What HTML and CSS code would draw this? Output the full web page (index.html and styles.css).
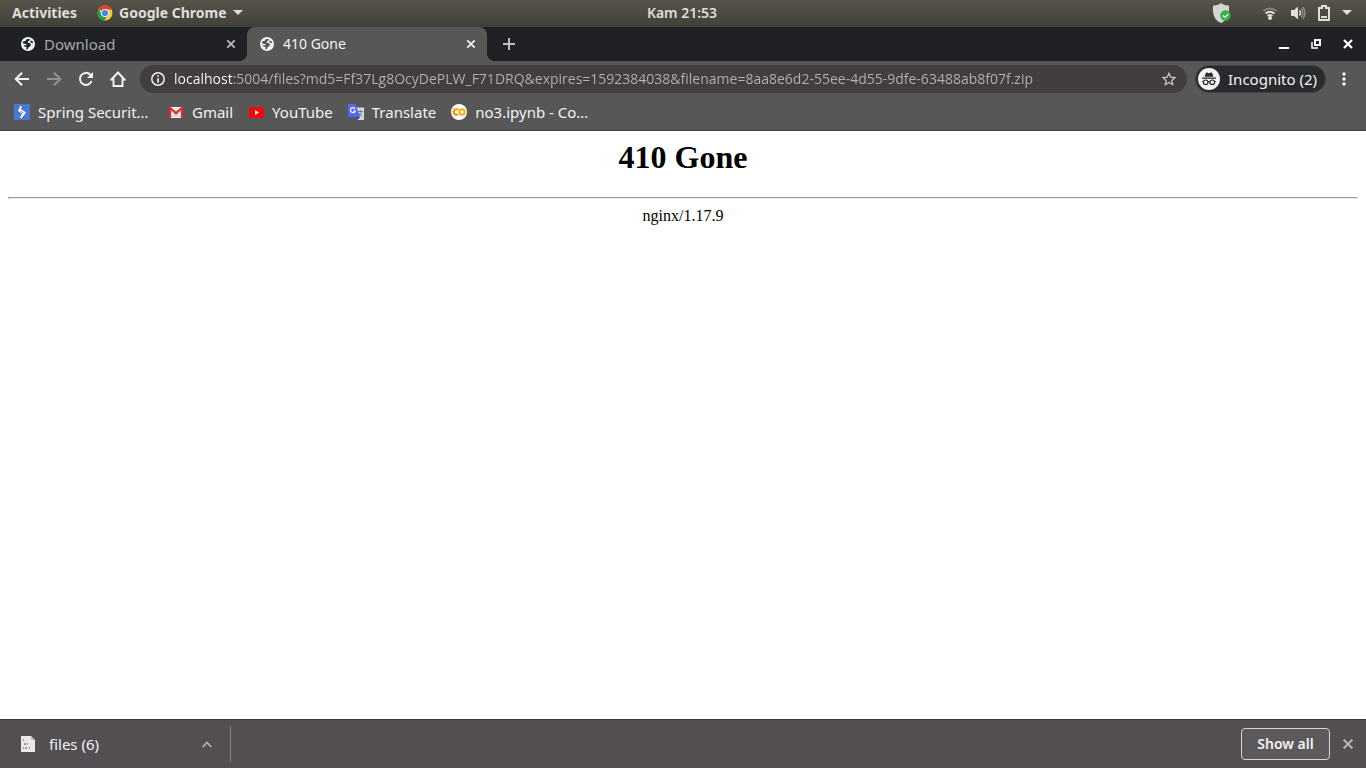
FILE: index.html
```html
<!DOCTYPE html>
<html lang="en">
<head>
<meta charset="utf-8">
<title>410 Gone</title>
<link rel="stylesheet" href="styles.css">
</head>
<body>
<svg class="defs" aria-hidden="true">
  <symbol id="globe" viewBox="0 0 14 14"><circle cx="7" cy="7" r="7" fill="#f1f3f4"/><path d="M5.600 2.200 8.500 1.700 8.800 3.200 7 4.200 6.600 5.500 8.500 6 9.800 7 9.600 9 7.600 10.200 6.400 12.400 5.100 12 5.600 9.900 3.400 9.600 2.600 8.300 5.500 8.300 5.600 7.300 3.600 6.700 1.700 6.300 2.400 4.300 4.400 4ZM9.800 3.500 11.400 4 12.300 6.300 10.900 6 9.200 5.200Z" fill="currentColor"/></symbol>
  <symbol id="cross" viewBox="0 0 10 10"><path d="m1.300 1.300 7.400 7.400m0-7.400-7.400 7.400" fill="none" stroke="currentColor" stroke-width="1.700"/></symbol>
  <symbol id="caret" viewBox="0 0 10 6"><path d="M0 0h10L5 5Z" fill="currentColor"/></symbol>
</svg>
<div class="desktop">
  <header class="panel">
    <div class="panel-side">
      <button class="panel-item">Activities</button>
      <button class="panel-item app-menu">
        <svg class="icon16" viewBox="0 0 16 16"><circle cx="8" cy="8" r="7.500" fill="#fbc934"/><path d="M8 8 1.500 4.200A7.500 7.500 0 0 1 14.600 4.400L8 4.500Z" fill="#e34133"/><path d="M1.500 4.200A7.500 7.500 0 0 0 7.200 15.500L11 9.800 8 11.400 5 9.800Z" fill="#1fa050"/><circle cx="8" cy="8" r="4" fill="#f4f4f4"/><circle cx="8" cy="8" r="3.100" fill="#4285f4"/></svg>
        <span>Google Chrome</span>
        <svg class="caret"><use href="#caret"/></svg>
      </button>
    </div>
    <button class="clock">Kam 21:53</button>
    <div class="panel-side tray">
      <button aria-label="Security status"><svg width="20" height="22" viewBox="0 0 20 22"><path d="M9 1c2.500 2 5 2.500 8 2.500C17.500 12 16 18 9 21 2 18 .5 12 1 3.500 4 3.500 6.500 3 9 1Z" fill="#d5d5d2"/><circle cx="13.500" cy="13.500" r="5.200" fill="#32b14b"/><path d="m11 13.500 2 2 3.300-3.500" fill="none" stroke="#fff" stroke-width="1.200"/></svg></button>
      <button class="system" aria-label="System menu">
        <svg width="16" height="16" viewBox="0 0 16 16" fill="none" stroke-width="2"><path d="M1.500 6q6.500-5 13 0" stroke="#86847d"/><path d="M3.500 8.500q4.500-3.500 9 0M5.600 11q2.400-2 4.800 0" stroke="#dededa"/><circle cx="8" cy="13" r="2" fill="#dededa"/></svg>
        <svg width="16" height="16" viewBox="0 0 16 16" fill="none"><path d="M1 5h3l4-3.500v13L4 11H1Z" fill="#dededa"/><path d="M9.500 5.500q2 2.500 0 5" stroke="#dededa" stroke-width="1.500"/><path d="M11.300 3.500q3.500 4.500 0 9M13 2q4 6 0 12" stroke="#96948c" stroke-width="1.300"/></svg>
        <svg width="12" height="16" viewBox="0 0 12 16"><path d="M4 1h4v2h3v12H1V3h3Z" fill="none" stroke="#dededa" stroke-width="2"/><path d="M3 11h6v2H3Z" fill="#dededa"/></svg>
        <svg class="caret"><use href="#caret"/></svg>
      </button>
    </div>
  </header>

  <nav class="tabs" aria-label="Tabs">
    <div class="tab inactive"><svg class="favicon"><use href="#globe"/></svg><span class="tab-title">Download</span><button class="close" aria-label="Close Download"><svg class="icon10"><use href="#cross"/></svg></button></div>
    <div class="tab active"><svg class="favicon"><use href="#globe"/></svg><span class="tab-title">410 Gone</span><button class="close" aria-label="Close 410 Gone"><svg class="icon10"><use href="#cross"/></svg></button></div>
    <button class="new-tab" aria-label="New tab"><svg width="12" height="12" viewBox="0 0 12 12"><path d="M6 0v12M0 6h12" stroke="currentColor" stroke-width="2"/></svg></button>
    <div class="window-controls">
      <button aria-label="Minimize"><svg width="10" height="10"><path d="M0 8h10v2H0Z" fill="#fff"/></svg></button>
      <button aria-label="Restore"><svg width="10" height="10" viewBox="0 0 10 10"><path d="M4 1h5v5H4Z" fill="none" stroke="#fff" stroke-width="2"/><path d="M1 3v6h6" fill="none" stroke="#fff" stroke-width="1.500"/></svg></button>
      <button aria-label="Close window"><svg width="10" height="10" viewBox="0 0 10 10"><path d="m1 1 8 8m0-8-8 8" stroke="#fff" stroke-width="2.200"/></svg></button>
    </div>
  </nav>

  <div class="toolbar">
    <button aria-label="Back"><svg class="icon16" viewBox="0 0 16 16"><path d="M15 8H2m6-6.300L1.700 8 8 14.300" fill="none" stroke="#f1f3f4" stroke-width="2"/></svg></button>
    <button aria-label="Forward"><svg class="icon16" viewBox="0 0 16 16"><path d="M1 8h13M8 1.700 14.300 8 8 14.300" fill="none" stroke="#929292" stroke-width="2"/></svg></button>
    <button aria-label="Reload"><svg class="icon16" viewBox="0 0 16 16"><path d="M13.600 10A6 6 0 1 1 12.300 3.700L13.500 5" fill="none" stroke="#f1f3f4" stroke-width="2"/><path d="M15 1v6H9Z" fill="#f1f3f4"/></svg></button>
    <button aria-label="Home"><svg class="icon16" viewBox="0 0 16 16"><path d="M1.500 8.500 8 1.500l6.500 7H12.500v6.500h-9V8.500Z" fill="none" stroke="#f1f3f4" stroke-width="1.900"/></svg></button>
    <div class="omnibox">
      <button aria-label="View site information"><svg width="14" height="14" viewBox="0 0 14 14"><circle cx="7" cy="7" r="6.200" fill="none" stroke="#f1f3f4" stroke-width="1.500"/><path d="M6.200 3.200h1.700v1.600H6.200Zm0 3h1.700v4.600H6.200Z" fill="#f1f3f4"/></svg></button>
      <input class="url" type="text" aria-label="Address" spellcheck="false" value="localhost:5004/files?md5=Ff37Lg8OcyDePLW_F71DRQ&amp;expires=1592384038&amp;filename=8aa8e6d2-55ee-4d55-9dfe-63488ab8f07f.zip">
      <button aria-label="Bookmark this page"><svg width="14" height="14" viewBox="0 0 14 14"><path d="m7 1.300 1.700 3.900 4.300.4-3.200 2.900.9 4.200L7 10.500l-3.700 2.200.9-4.200L1 5.600l4.300-.4Z" fill="none" stroke="#c9c7c8" stroke-width="1.300"/></svg></button>
    </div>
    <button class="incognito">
      <svg width="22" height="22" viewBox="0 0 22 22"><circle cx="11" cy="11" r="11" fill="#f1f3f4"/><path d="M7.700 5.200q.3-.9 1.200-.6L11 5.200l2.100-.6q.9-.3 1.200.6l1 3.500H6.700ZM4 9.500h14v1.200H4Z" fill="#292a2d"/><g fill="none" stroke="#292a2d" stroke-width="1.200"><circle cx="7.700" cy="14.300" r="2.300"/><circle cx="14.300" cy="14.300" r="2.300"/><path d="M10 14q1-.8 2 0M4.200 13.500h1.200m11.200 0h1.200"/></g></svg>
      <span>Incognito (2)</span>
    </button>
    <button class="menu" aria-label="Chrome menu"><svg width="4" height="14" fill="#f1f3f4"><circle cx="2" cy="2" r="1.700"/><circle cx="2" cy="7" r="1.700"/><circle cx="2" cy="12" r="1.700"/></svg></button>
  </div>

  <nav class="bookmarks" aria-label="Bookmarks">
    <a href="#spring"><svg class="icon16" viewBox="0 0 16 16"><rect width="16" height="16" rx="1" fill="#4878d3"/><path d="m6.500 1.500 1.500 1.500-1.300 2 5.300 3.500-4.500 6-1.500-1.200 2.200-3.500L4 7Z" fill="#fff"/><path d="m6.700 7.300 2.600 1.500" stroke="#4878d3" stroke-width="1"/></svg><span>Spring Securit…</span></a>
    <a href="#gmail"><svg class="icon16" viewBox="0 0 16 16"><path d="M1 3h14v11H1Z" fill="#f1f1f1"/><path d="m3 13 5-5 5 5Z" fill="#d9d9d9"/><path d="M2 14V4l6 5.200L14 4v10" fill="none" stroke="#d92c35" stroke-width="2.200"/></svg><span>Gmail</span></a>
    <a href="#youtube"><svg class="icon16" viewBox="0 0 16 16"><rect x="1" y="3" width="15" height="11" rx="2.500" fill="#f00"/><path d="m7 6 4 2.500L7 11Z" fill="#fff"/></svg><span>YouTube</span></a>
    <a href="#translate"><svg class="icon16" viewBox="0 0 16 16"><path d="M7 3.500h9V16H9Z" fill="#d5d8dc"/><path d="M9.500 7.500H15M12.300 6v1.500m1.500 0q-.8 3-3.500 5m.7-3.500q1 2 3.300 3.500" fill="none" stroke="#607d8b" stroke-width="1"/><path d="m8 13h4l-2.500 3Z" fill="#3c25b8"/><path d="M0 0h7.500L12 13H1.500Q0 13 0 11.500Z" fill="#5368f5"/><path d="M7 4.800A2.500 2.500 0 1 0 7.300 7H5" fill="none" stroke="#fff" stroke-width="1.200"/></svg><span>Translate</span></a>
    <a href="#notebook"><svg class="icon16" viewBox="0 0 16 16"><circle cx="8" cy="8" r="8" fill="#fff"/><g fill="none" stroke-width="2"><circle cx="11" cy="8" r="2.700" stroke="#f9ab00"/><path d="M7 5.800a2.700 2.700 0 1 0 0 4.400" stroke="#f48b00"/><path d="M3.100 6.100A2.700 2.700 0 0 1 7 5.800" stroke="#fbb400"/></g></svg><span>no3.ipynb - Co…</span></a>
  </nav>

  <main class="page">
    <h1>410 Gone</h1>
    <hr>
    <p>nginx/1.17.9</p>
  </main>

  <footer class="downloads">
    <div class="download">
      <svg class="icon16" viewBox="0 0 16 16"><path d="M1 0h10l4 4v12H1Z" fill="#e8e8e6"/><path d="M11 0v4h4Z" fill="#bcbcba"/><path d="M3 3h1v2H3Zm1 4h2v2H4Zm3 0h1v2H7Zm-4 4h1v2H3Zm2 0h2v2H5Zm4 0h1v2H9Z" fill="#999"/></svg>
      <a href="#files">files (6)</a>
      <button aria-label="Download options"><svg width="10" height="7" viewBox="0 0 10 7"><path d="m.8 5.800L5 1.500l4.200 4.300" fill="none" stroke="#b5b2b4" stroke-width="1.700"/></svg></button>
    </div>
    <button class="show-all">Show all</button>
    <button class="dismiss" aria-label="Close downloads bar"><svg width="12" height="12"><use href="#cross"/></svg></button>
  </footer>
</div>
</body>
</html>
```
FILE: styles.css
```css
* { box-sizing: border-box; }
body { margin: 0; font: 14px/20px "Noto Sans", "Open Sans", sans-serif; color: #f1f3f4; }
button { display: flex; align-items: center; justify-content: center; margin: 0; padding: 0; border: 0; background: none; color: inherit; font: inherit; white-space: nowrap; }
a { color: inherit; text-decoration: none; }
svg { display: block; flex: none; }
.defs { position: absolute; width: 0; height: 0; }
.icon16 { width: 16px; height: 16px; }
.icon10 { width: 10px; height: 10px; }
.desktop { display: flex; flex-direction: column; min-height: 100vh; background: #fff; }

.panel { display: grid; grid-template-columns: 1fr auto 1fr; align-items: center; height: 27px; padding: 0 14px 1px 12px; background: linear-gradient(#57544a, #403f39); color: #dededa; }
.panel-side { display: flex; align-items: center; gap: 20px; }
.panel-item { font-weight: 700; }
.clock { font-weight: 600; }
.app-menu { gap: 6px; }
.caret { width: 10px; height: 6px; }
.tray { justify-content: flex-end; gap: 30px; }
.system { gap: 12px; }

.tabs { display: flex; height: 34px; background: #202124; }
.tab { position: relative; display: flex; align-items: center; gap: 9px; width: 240px; padding: 0 11px 0 13px; }
.tab.inactive { width: 247px; padding-left: 21px; color: #202124; }
.tab.active { background: #575757; color: #575757; border-radius: 8px 8px 0 0; }
.tab.active::before, .tab.active::after { content: ""; position: absolute; bottom: 0; width: 8px; height: 8px; }
.tab.active::before { right: 100%; background: radial-gradient(circle at 0 0, #202124 8px, #575757 8px); }
.tab.active::after { left: 100%; background: radial-gradient(circle at 100% 0, #202124 8px, #575757 8px); }
.favicon { width: 14px; height: 14px; }
.tab-title { flex: 1; color: #a6a8ab; }
.tab.inactive .tab-title { font-size: 15px; }
.tab.active .tab-title, .tab.active .close { color: #f1f3f4; }
.close { color: #bdc1c6; }
.new-tab { width: 44px; color: #bdc1c6; }
.window-controls { display: flex; gap: 22px; margin-left: auto; padding-right: 13px; }

.toolbar { display: flex; align-items: center; gap: 16px; height: 36px; padding: 0 20px 0 14px; background: #575757; }
.omnibox { display: flex; align-items: center; gap: 9px; flex: 1; min-width: 0; height: 28px; margin: 0 -8px 0 -2px; padding: 0 11px; border-radius: 14px; background: #423d40; }
.url { flex: 1; min-width: 0; height: 28px; margin: 0; padding: 0 0 2px; border: 0; outline: 0; font: 14px "Open Sans", "Noto Sans", sans-serif; background: linear-gradient(90deg, #fff 59px, #b4b1b3 59px); background-clip: text; -webkit-background-clip: text; -webkit-text-fill-color: transparent; }
.incognito { gap: 8px; height: 28px; padding: 0 8px 0 2px; border: 1px solid #414244; border-radius: 14px; background: #292a2d; font-size: 15px; }

.bookmarks { display: flex; align-items: center; gap: 15px; height: 34px; padding: 0 14px 4px; border-bottom: 1px solid #3d3d3d; background: #575757; font-size: 15px; }
.bookmarks a { display: flex; align-items: center; gap: 8px; }
.bookmarks a:first-child { min-width: 139px; }

.page { flex: 1; padding: 8px; color: #000; font: 16px "Liberation Serif", serif; text-align: center; }
.page h1 { margin: 0 0 21px; font-size: 32px; line-height: 37px; }
.page hr { margin: 8px 0; }
.page p { margin: 0; }

.downloads { display: flex; align-items: center; height: 49px; padding-right: 12px; border-top: 1px solid #3a383a; background: #534e52; }
.download { display: flex; align-items: center; gap: 13px; width: 231px; height: 36px; padding: 0 18px 0 20px; border-right: 1px solid #858184; }
.download a { flex: 1; font-size: 15px; }
.show-all { margin-left: auto; width: 89px; height: 32px; border: 1px solid #d8d6d8; border-radius: 4px; background: #5d585c; font-weight: 600; }
.dismiss { margin-left: 12px; color: #b5b2b4; }
```
